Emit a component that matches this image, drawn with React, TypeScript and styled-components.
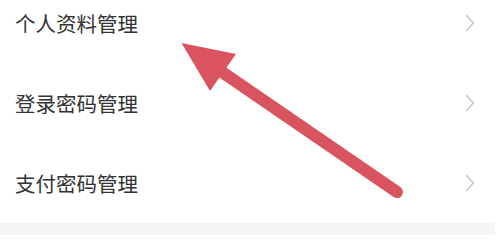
import styled, { createGlobalStyle } from 'styled-components';

const GlobalStyle = createGlobalStyle`
    html, body {
        margin: 0;
        padding: 0;
        background: #ffffff;
    }
    body {
        font-family: "Noto Sans CJK SC", "Noto Sans", sans-serif;
    }
`;

const Page = styled.div`
    position: relative;
    width: 498px;
    height: 242px;
    overflow: hidden;
    background: #ffffff;
`;

const List = styled.div`
    display: flex;
    flex-direction: column;
    margin-top: -17px;
`;

const Row = styled.div`
    display: flex;
    align-items: center;
    justify-content: space-between;
    height: 80px;
    padding: 0 23px 0 15px;
`;

const Label = styled.span`
    font-size: 20.5px;
    line-height: 1;
    color: #333333;
    letter-spacing: 0;
`;

const Divider = styled.div`
    height: 12px;
    width: 495px;
    background: #f5f5f5;
`;

const Overlay = styled.svg`
    position: absolute;
    left: 0;
    top: 0;
    pointer-events: none;
`;

const Chevron = () => (
    <svg width="10" height="18" viewBox="0 0 10 18" fill="none">
        <path d="M1.5 1.5L8.5 9L1.5 16.5" stroke="#c4c4c4" strokeWidth="1.3" strokeLinecap="round" strokeLinejoin="round" />
    </svg>
);

const items = ['个人资料管理', '登录密码管理', '支付密码管理'];

export default function App() {
    return (
        <Page>
            <GlobalStyle />
            <List>
                {items.map((text) => (
                    <Row key={text}>
                        <Label>{text}</Label>
                        <Chevron />
                    </Row>
                ))}
            </List>
            <Divider />

            {/* annotation arrow */}
            <Overlay width="498" height="242" viewBox="0 0 498 242">
                <line x1="222" y1="72" x2="397" y2="192" stroke="#d9545e" strokeWidth="12" strokeLinecap="round" />
                <polygon points="181.5,43 236,54 210,91" fill="#d9545e" />
            </Overlay>
        </Page>
    );
}
